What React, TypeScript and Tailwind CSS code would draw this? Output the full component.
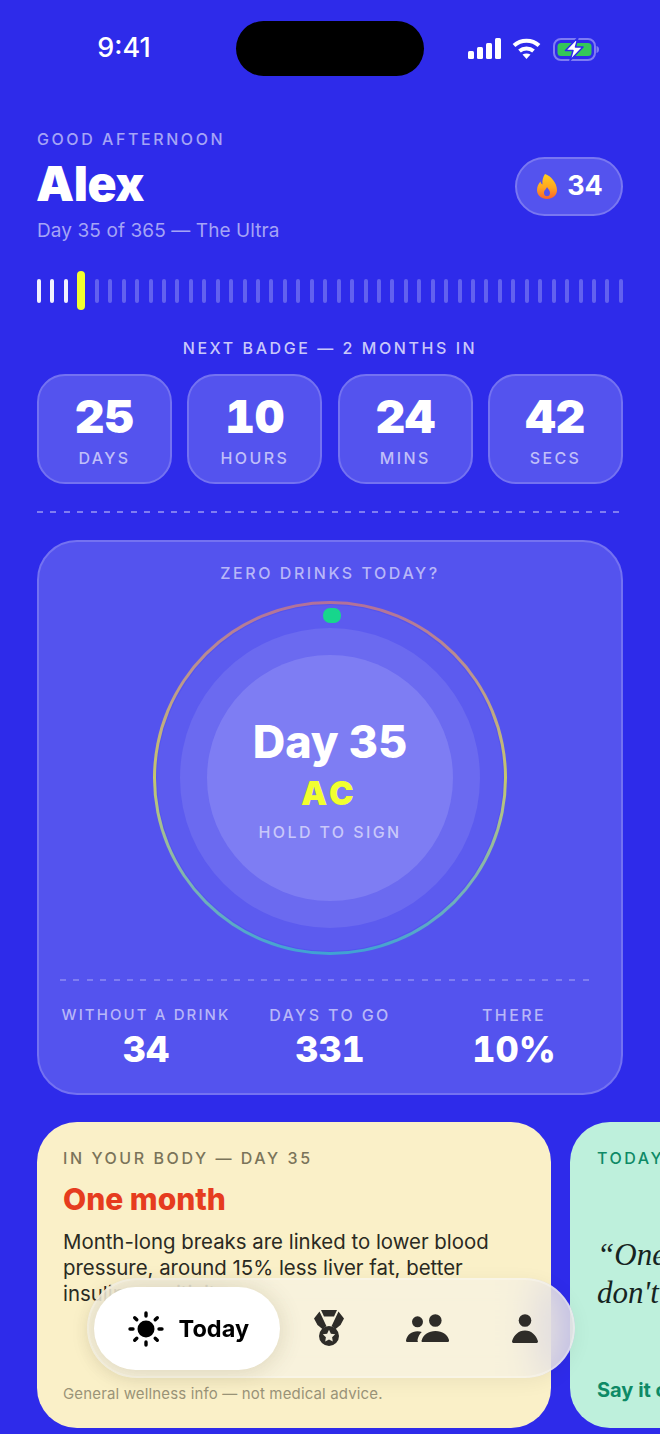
import React from 'react';

const ticks = Array.from({ length: 44 }, (_, i) => i);

const countdown = [
  { value: '25', label: 'DAYS' },
  { value: '10', label: 'HOURS' },
  { value: '24', label: 'MINS' },
  { value: '42', label: 'SECS' },
];

const stats = [
  { label: 'WITHOUT A DRINK', value: '34', labelClass: 'text-[15px] tracking-[0.14em]' },
  { label: 'DAYS TO GO', value: '331', labelClass: 'text-[16px] tracking-[0.15em]' },
  { label: 'THERE', value: '10%', labelClass: 'text-[16px] tracking-[0.15em]' },
];

const StatusIcons = () => (
  <div className="flex items-center pl-[44px]">
    <svg width="33" height="21" viewBox="0 0 33 21" fill="#fff">
      <rect x="0" y="13" width="6" height="8" rx="1.5" />
      <rect x="9" y="9" width="6" height="12" rx="1.5" />
      <rect x="18" y="5" width="6" height="16" rx="1.5" />
      <rect x="27" y="0" width="6" height="21" rx="1.5" />
    </svg>
    <svg className="ml-[11px]" width="29" height="21" viewBox="0 0 29 21" fill="none" stroke="#fff" strokeWidth="4">
      <path d="M2 7.5C9 1 20 1 27 7.5" />
      <path d="M7.5 13C11.5 9.5 17.5 9.5 21.5 13" />
      <path d="M14.5 21L10.5 16.6C13 15 16 15 18.5 16.6Z" fill="#fff" stroke="none" />
    </svg>
    <svg className="ml-[12px]" width="46" height="24" viewBox="0 0 46 24" fill="none">
      <rect x="1" y="2" width="41" height="21" rx="7" stroke="#7F7CF3" strokeWidth="2" />
      <rect x="4.500" y="6" width="34" height="13" rx="3.500" fill="#34C759" />
      <path d="M43.500 9C45.300 9.500 46 10.500 46 12.500C46 14.500 45.300 15.500 43.500 16Z" fill="#7F7CF3" />
      <path d="M25 0.500L12.500 13.500H20L17 23.500L30 10H22.500Z" fill="#fff" stroke="#2E2BEA" strokeWidth="1.500" strokeLinejoin="round" />
    </svg>
  </div>
);

const Flame = () => (
  <svg width="20" height="25" viewBox="0 0 20 25">
    <defs>
      <linearGradient id="flame" x1="0" y1="0" x2="0" y2="1">
        <stop offset="0" stopColor="#FFD11E" />
        <stop offset="0.55" stopColor="#FFA51F" />
        <stop offset="1" stopColor="#F9622B" />
      </linearGradient>
    </defs>
    <path
      fillRule="evenodd"
      fill="url(#flame)"
      d="M8 0C14 2 20 9 20 16C20 21.500 15.500 25 10 25C4.500 25 0 21.500 0 16C0 12.500 1.500 9.500 3.500 7.500C3.800 9 4.500 10 5.500 10.500C5 6.500 6 3 8 0ZM10 13C9.500 15 7 16 7 19C7 21 8.300 22.300 10 22.300C11.700 22.300 13 21 13 19C13 16.500 11 15 10 13Z"
    />
  </svg>
);

const SunIcon = () => (
  <svg width="36" height="36" viewBox="0 0 36 36" fill="#000" stroke="#000" strokeWidth="3.400" strokeLinecap="round">
    <circle cx="18" cy="18" r="8.500" stroke="none" />
    <path d="M18 2V5M18 31V34M2 18H5M31 18H34M6.700 6.700L8.800 8.800M27.200 27.200L29.300 29.300M6.700 29.300L8.800 27.200M27.200 8.800L29.300 6.700" />
  </svg>
);

const MedalIcon = () => (
  <svg width="30" height="36" viewBox="0 0 30 36" fill="#2E2C28">
    <path d="M7 0H23L20 6.500H10Z" />
    <path d="M5.500 1.500L0 8.500L3.500 15L9 19.500C9.500 18 11 16.800 12.500 16.200Z" />
    <path d="M24.500 1.500L30 8.500L26.500 15L21 19.500C20.500 18 19 16.800 17.500 16.200Z" />
    <circle cx="15" cy="26" r="10" />
    <path fill="#F3EEDC" d="M15 19.800L16.900 23.700L21.200 24.300L18.100 27.300L18.800 31.500L15 29.500L11.200 31.500L11.900 27.300L8.800 24.300L13.100 23.700Z" />
  </svg>
);

const PeopleIcon = () => (
  <svg width="43" height="28" viewBox="0 0 43 28" fill="#2E2C28">
    <circle cx="29.300" cy="6.500" r="6.300" />
    <circle cx="11.500" cy="7.800" r="5.500" />
    <path d="M16.500 28C15.500 28 15.300 27 15.800 26C17.500 20.500 22.500 17 29.500 17C36.500 17 41.500 20.500 43 26C43.300 27 42.700 28 41.500 28Z" />
    <path d="M0 26.500C1 21 5.500 17.300 11.500 17.300C13 17.300 14.500 17.500 15.800 18C13.700 20 12.300 22.500 11.700 25C11.400 26.200 11.500 27.200 12 28H1.500C0.500 28 -0.200 27.300 0 26.500Z" />
  </svg>
);

const PersonIcon = () => (
  <svg width="26" height="29" viewBox="0 0 26 29" fill="#2E2C28">
    <circle cx="13" cy="6.500" r="6.300" />
    <path d="M1.500 29C0.500 29 -0.200 28 0.100 27C1.700 21.500 6.500 16.500 13 16.500C19.500 16.500 24.300 21.500 25.900 27C26.200 28 25.500 29 24.500 29Z" />
  </svg>
);

const App: React.FC = () => {
  return (
    <div className="relative h-[1434px] w-[660px] overflow-hidden bg-[#2E2BEA] [font-family:Inter,sans-serif] text-white">
      {/* Status bar */}
      <div className="flex pt-[21px]">
        <div className="flex h-[55px] w-[236px] items-center justify-center pl-[12px] text-[27px] font-medium">9:41</div>
        <div className="h-[55px] w-[188px] rounded-full bg-black" />
        <StatusIcons />
      </div>

      <div className="px-[37px] pt-[53px]">
        {/* Greeting */}
        <div className="flex items-center justify-between">
          <div>
            <div className="text-[16px] leading-[20px] font-medium tracking-[0.16em] text-[#A5A4F6]">GOOD AFTERNOON</div>
            <div className="mt-[8px] -ml-[1px] text-[48px] leading-[54px] font-black tracking-[-0.01em]">Alex</div>
            <div className="mt-[8px] text-[19px] leading-[24px] tracking-[0.005em] text-[#A5A4F6]">Day 35 of 365 — The Ultra</div>
          </div>
          <div className="flex h-[59px] w-[108px] items-center justify-center gap-[10px] rounded-full border-2 border-[#7977F1] bg-[#5453EE] pl-[2px]">
            <Flame />
            <span className="text-[27px] leading-[32px] font-bold">34</span>
          </div>
        </div>

        {/* Year progress */}
        <div className="mt-[28px] flex h-[39px] items-center justify-between">
          {ticks.map(i =>
            i === 3 ? (
              <div key={i} className="h-[39px] w-[8px] rounded-full bg-[#F2FF2E]" />
            ) : (
              <div key={i} className={`h-[24px] w-[4px] rounded-full ${i < 3 ? 'bg-[#F0F0FE]' : 'bg-[#6261EF]'}`} />
            ),
          )}
        </div>

        {/* Next badge countdown */}
        <div className="mt-[28px] text-center text-[16px] leading-[20px] font-medium tracking-[0.16em] text-[#C9C8FA]">
          NEXT BADGE — 2 MONTHS IN
        </div>
        <div className="mt-[16px] flex justify-between">
          {countdown.map(item => (
            <div
              key={item.label}
              className="flex h-[110px] w-[135px] flex-col items-center rounded-[28px] border-2 border-[#7472F1] bg-[#5453EE] pt-[17px]"
            >
              <div className="text-[46px] leading-[46px] font-black tabular-nums">{item.value}</div>
              <div className="mt-[9px] text-[16px] leading-[20px] font-medium tracking-[0.15em] text-[#C0BFF9]">{item.label}</div>
            </div>
          ))}
        </div>

        <div className="mt-[27px] h-[2px] bg-[repeating-linear-gradient(90deg,#7F7DF2_0_6px,transparent_6px_13.4px)]" />

        {/* Sign card */}
        <div className="mt-[27px] flex h-[555px] flex-col items-center rounded-[40px] border-2 border-[#7472F1] bg-[#5453EE] pt-[21px]">
          <div className="text-[16px] leading-[20px] font-medium tracking-[0.16em] text-[#B8B7F8]">ZERO DRINKS TODAY?</div>
          <div className="relative mt-[18px] flex h-[354px] w-[354px] items-center justify-center rounded-full bg-linear-to-b from-[#B2709A] via-[#C5C76C] to-[#3EA2D4] p-[3px]">
            <div className="flex h-full w-full items-center justify-center rounded-full bg-[#5453EE]">
              <div className="flex h-[346px] w-[346px] items-center justify-center rounded-full bg-[#5C5BEF]">
                <div className="flex h-[300px] w-[300px] items-center justify-center rounded-full bg-[#6B6AF0]">
                  <div className="flex h-[246px] w-[246px] flex-col items-center justify-center rounded-full bg-[#7E7DF3] pt-[4px]">
                    <div className="text-[45px] leading-[48px] font-extrabold">Day 35</div>
                    <div className="mt-[9px] mr-[2px] text-[33px] leading-[36px] font-black tracking-[0.1em] text-[#F2FF2E]">AC</div>
                    <div className="mt-[11px] text-[16px] leading-[20px] font-medium tracking-[0.15em] text-[#C9C8FA]">HOLD TO SIGN</div>
                  </div>
                </div>
              </div>
            </div>
            <div className="absolute top-[7px] left-[170px] h-[15px] w-[18px] rounded-[7px] bg-[#17D68C]" />
          </div>
          <div className="mt-[24px] mr-[7px] h-[2px] w-[533px] bg-[repeating-linear-gradient(90deg,#7F7DF2_0_6px,transparent_6px_13.4px)]" />
          <div className="mt-[24px] grid w-[552px] grid-cols-3">
            {stats.map(stat => (
              <div key={stat.label} className="flex flex-col items-center">
                <div className={`leading-[20px] font-medium text-[#B8B7F8] ${stat.labelClass}`}>{stat.label}</div>
                <div className="mt-[4px] text-[36px] leading-[40px] font-extrabold tabular-nums">{stat.value}</div>
              </div>
            ))}
          </div>
        </div>
      </div>

      {/* Cards */}
      <div className="mt-[27px] flex gap-[19px] pl-[37px]">
        <div className="flex h-[306px] w-[514px] shrink-0 flex-col rounded-[40px] bg-[#FAF0C8] px-[26px] pt-[26px] pb-[24px]">
          <div className="text-[16px] leading-[20px] font-medium tracking-[0.16em] text-[#7A745A]">IN YOUR BODY — DAY 35</div>
          <div className="mt-[13px] text-[30px] leading-[36px] font-extrabold text-[#E63C1E]">One month</div>
          <p className="mt-[12px] text-[20.400px] leading-[26px] text-[#2A2A22]">
            Month-long breaks are linked to lower blood pressure, around 15% less liver fat, better insulin sensitivity.
          </p>
          <div className="mt-auto text-[15px] leading-[20px] tracking-[0.01em] text-[#9A9478]">
            General wellness info — not medical advice.
          </div>
        </div>
        <div className="flex h-[306px] w-[514px] shrink-0 flex-col rounded-[40px] bg-[#BEF0DC] px-[27px] pt-[26px] pb-[26px]">
          <div className="text-[16px] leading-[20px] font-medium tracking-[0.16em] text-[#0E8A66]">TODAY'S LINE</div>
          <div className="mt-[68px] [font-family:'Liberation_Serif',serif] text-[31px] leading-[38px] text-[#16241F] italic">
            <div>“One day at a time,</div>
            <div>don't count the rest.”</div>
          </div>
          <div className="mt-auto text-[20px] leading-[24px] font-bold text-[#0E8A66]">Say it out loud</div>
        </div>
      </div>

      {/* Tab bar */}
      <div className="absolute top-[1278px] left-[87px] flex h-[100px] w-[488px] items-center rounded-full border-2 border-white/30 bg-[#F6F2E4]/70 pl-[5px] shadow-[0_4px_20px_rgba(0,0,0,0.06)] backdrop-blur-xl">
        <div className="flex h-[83px] w-[186px] items-center justify-center gap-[15px] rounded-full bg-white pt-[1px] pl-[3px] shadow-[0_2px_24px_rgba(60,50,0,0.16)]">
          <SunIcon />
          <span className="text-[23.500px] leading-[30px] font-bold text-black">Today</span>
        </div>
        <div className="flex w-[98px] justify-center"><MedalIcon /></div>
        <div className="flex w-[98px] justify-center pl-[2px]"><PeopleIcon /></div>
        <div className="flex w-[98px] justify-center pl-[2px]"><PersonIcon /></div>
      </div>
    </div>
  );
};

export default App;
